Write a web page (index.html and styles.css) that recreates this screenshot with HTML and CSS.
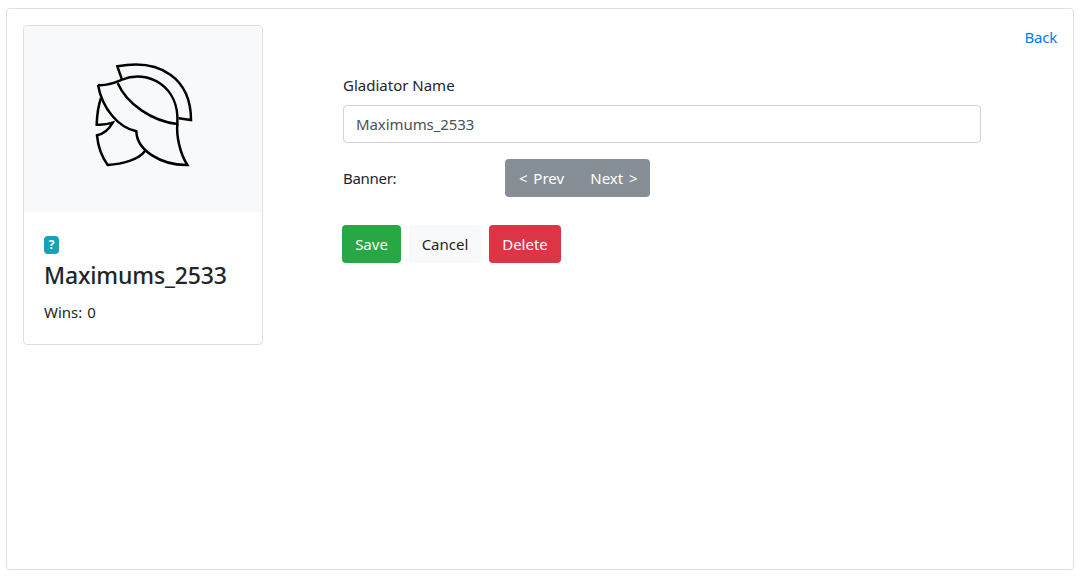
FILE: index.html
```html
<!DOCTYPE html>
<html lang="en">
<head>
<meta charset="utf-8">
<title>Edit Gladiator</title>
<link rel="stylesheet" href="styles.css">
</head>
<body>
<main class="panel">
  <aside class="card">
    <div class="card-banner">
      <svg class="helmet" viewBox="0 0 360 360" aria-hidden="true">
        <path d="M114 77L100 37C230 12 321 75 321 198L284 193"/>
        <path d="M42 93C72 96 94 85 114 77C190 45 288 95 280 210C205 202 128 150 101 87"/>
        <path d="M42 93C55 165 104 221 157 232C159 289 230 334 310 333C287 296 277 246 280 210"/>
        <path d="M51 132C42 157 39 185 38 212C55 213 72 211 86 206C75 226 59 240 39 244C42 278 54 309 71 333C116 330 164 317 183 291"/>
      </svg>
    </div>
    <div class="card-body">
      <span class="badge">?</span>
      <h1 class="name">Maximums_2533</h1>
      <p class="wins">Wins: 0</p>
    </div>
  </aside>
  <form class="form">
    <label class="label" for="name">Gladiator Name</label>
    <input class="input" id="name" type="text" value="Maximums_2533">
    <div class="banner-row">
      <span class="banner-label">Banner:</span>
      <div class="btn-group">
        <button class="btn btn-secondary prev" type="button">&lt; Prev</button>
        <button class="btn btn-secondary next" type="button">Next &gt;</button>
      </div>
    </div>
    <div class="actions">
      <button class="btn btn-save" type="button">Save</button>
      <button class="btn btn-cancel" type="button">Cancel</button>
      <button class="btn btn-delete" type="button">Delete</button>
    </div>
  </form>
  <a class="back" href="#">Back</a>
</main>
</body>
</html>
```
FILE: styles.css
```css
* { box-sizing: border-box; }

body {
  margin: 8px 7px 8px 6px;
  background: #fff;
  color: #212529;
  font: 15px/24px "Noto Sans", "Open Sans", sans-serif;
}

.panel {
  display: flex;
  align-items: flex-start;
  height: 562px;
  padding: 16px;
  border: 1px solid #dfdfdf;
  border-radius: 4px;
}

.card {
  flex: none;
  width: 240px;
  height: 320px;
  border: 1px solid #dfdfdf;
  border-radius: 4px;
  overflow: hidden;
}

.card-banner {
  height: 186px;
  padding: 28px 0 0 60px;
  background: #f8f9fa;
}

.helmet {
  display: block;
  width: 120px;
  height: 120px;
  fill: none;
  stroke: #000;
  stroke-width: 7.5;
}

.card-body { padding: 24px 20px 0; }

.badge {
  display: block;
  width: 15px;
  height: 18px;
  border-radius: 4px;
  background: #17a2b8;
  color: #fff;
  font-size: 12px;
  font-weight: 700;
  line-height: 18px;
  text-align: center;
}

.name {
  margin: 7px 0 9px;
  font-size: 23px;
  font-weight: 500;
  letter-spacing: -0.15px;
  line-height: 29px;
  white-space: nowrap;
}

.wins {
  margin: 0;
  padding-top: 1px;
  word-spacing: 1px;
}

.form {
  flex: 1;
  margin: 48px 0 0 80px;
}

.label {
  display: block;
  margin-bottom: 8px;
}

.input {
  display: block;
  width: 638px;
  height: 38px;
  padding: 6px 12px;
  border: 1px solid #ced4da;
  border-radius: 4px;
  background: #fff;
  color: #495057;
  font: inherit;
  letter-spacing: -0.08px;
}

.banner-row {
  display: flex;
  align-items: center;
  margin-top: 16px;
}

.banner-label {
  width: 162px;
  letter-spacing: -0.3px;
}

.btn-group {
  display: flex;
  border-radius: 4px;
  overflow: hidden;
}

.btn {
  height: 38px;
  padding: 0;
  border: 0;
  border-radius: 4px;
  color: #fff;
  font: inherit;
  text-align: center;
}

.btn-secondary {
  border-radius: 0;
  background: #868e96;
  word-spacing: 2px;
}

.prev { width: 73px; }
.next { width: 72px; }

.actions {
  display: flex;
  gap: 8px;
  margin: 28px 0 0 -1px;
}

.btn-save { width: 59px; background: #28a745; }
.btn-cancel { width: 72px; background: #f8f9fa; color: #212529; }
.btn-delete { width: 72px; background: #dc3545; }

.back {
  flex: none;
  color: #007bff;
  text-decoration: none;
  letter-spacing: -0.2px;
}
```
